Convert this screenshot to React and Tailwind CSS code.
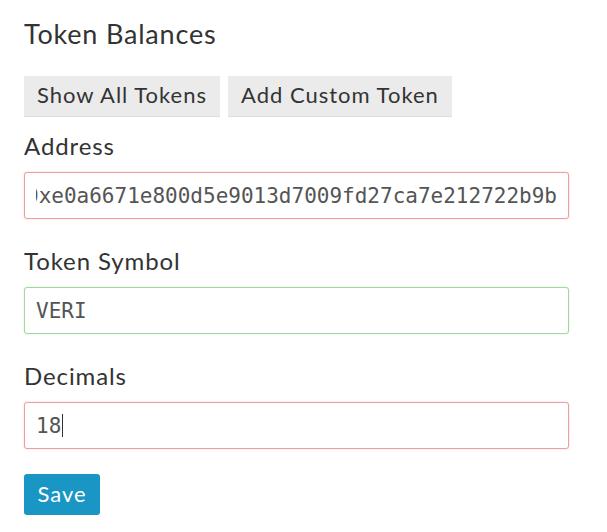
const lato = { fontFamily: "Lato, 'Open Sans', sans-serif" }

function Field({ label, value, valid, first, cursor, scroll }) {
  return (
    <div className={first ? "mt-[13px]" : "mt-[26px]"}>
      <div className="text-[24px] leading-[32px] tracking-[0.9px] text-[#333]">{label}</div>
      <div
        className={
          "mt-[10px] h-[47px] w-[545px] rounded-[3px] border bg-white px-[11px] flex items-center " +
          (valid
            ? "border-[#a3d7a0] shadow-[0_0_2px_rgba(120,200,110,0.35)]"
            : "border-[#ec9f9f] shadow-[0_0_2px_rgba(230,100,100,0.35)]")
        }
      >
        <div
          className={
            "flex flex-1 items-center overflow-hidden whitespace-nowrap" + (scroll ? " justify-end" : "")
          }
        >
          <span
            className="shrink-0 text-[21px] leading-[26px] text-[#555]"
            style={{ fontFamily: "'DejaVu Sans Mono', 'Liberation Mono', monospace" }}
          >
            {value}
          </span>
          {cursor && <span className="ml-[1px] inline-block h-[23px] w-px shrink-0 bg-[#333]" />}
        </div>
      </div>
    </div>
  )
}

export default function App() {
  return (
    <div className="min-h-[532px] w-[607px] bg-white px-6 pt-[14px]" style={lato}>
      <h1 className="text-[27px] leading-[40px] tracking-[0.8px] font-normal text-[#333]">Token Balances</h1>
      <div className="mt-[22px] flex gap-2">
        <button className="h-[41px] px-[13px] pb-[3px] text-[22px] tracking-[1px] text-[#333] bg-[#ebebeb] border-b border-[#dedede]">
          Show All Tokens
        </button>
        <button className="h-[41px] px-[13px] pb-[3px] text-[22px] tracking-[1px] text-[#333] bg-[#ebebeb] border-b border-[#dedede]">
          Add Custom Token
        </button>
      </div>
      <Field label="Address" value="0xe0a6671e800d5e9013d7009fd27ca7e212722b9b" first scroll />
      <Field label="Token Symbol" value="VERI" valid />
      <Field label="Decimals" value="18" cursor />
      <button className="mt-[25px] h-[41px] w-[76px] rounded-[3px] bg-[#1a96c4] pb-[2px] text-[22px] tracking-[1px] text-white">
        Save
      </button>
    </div>
  )
}
